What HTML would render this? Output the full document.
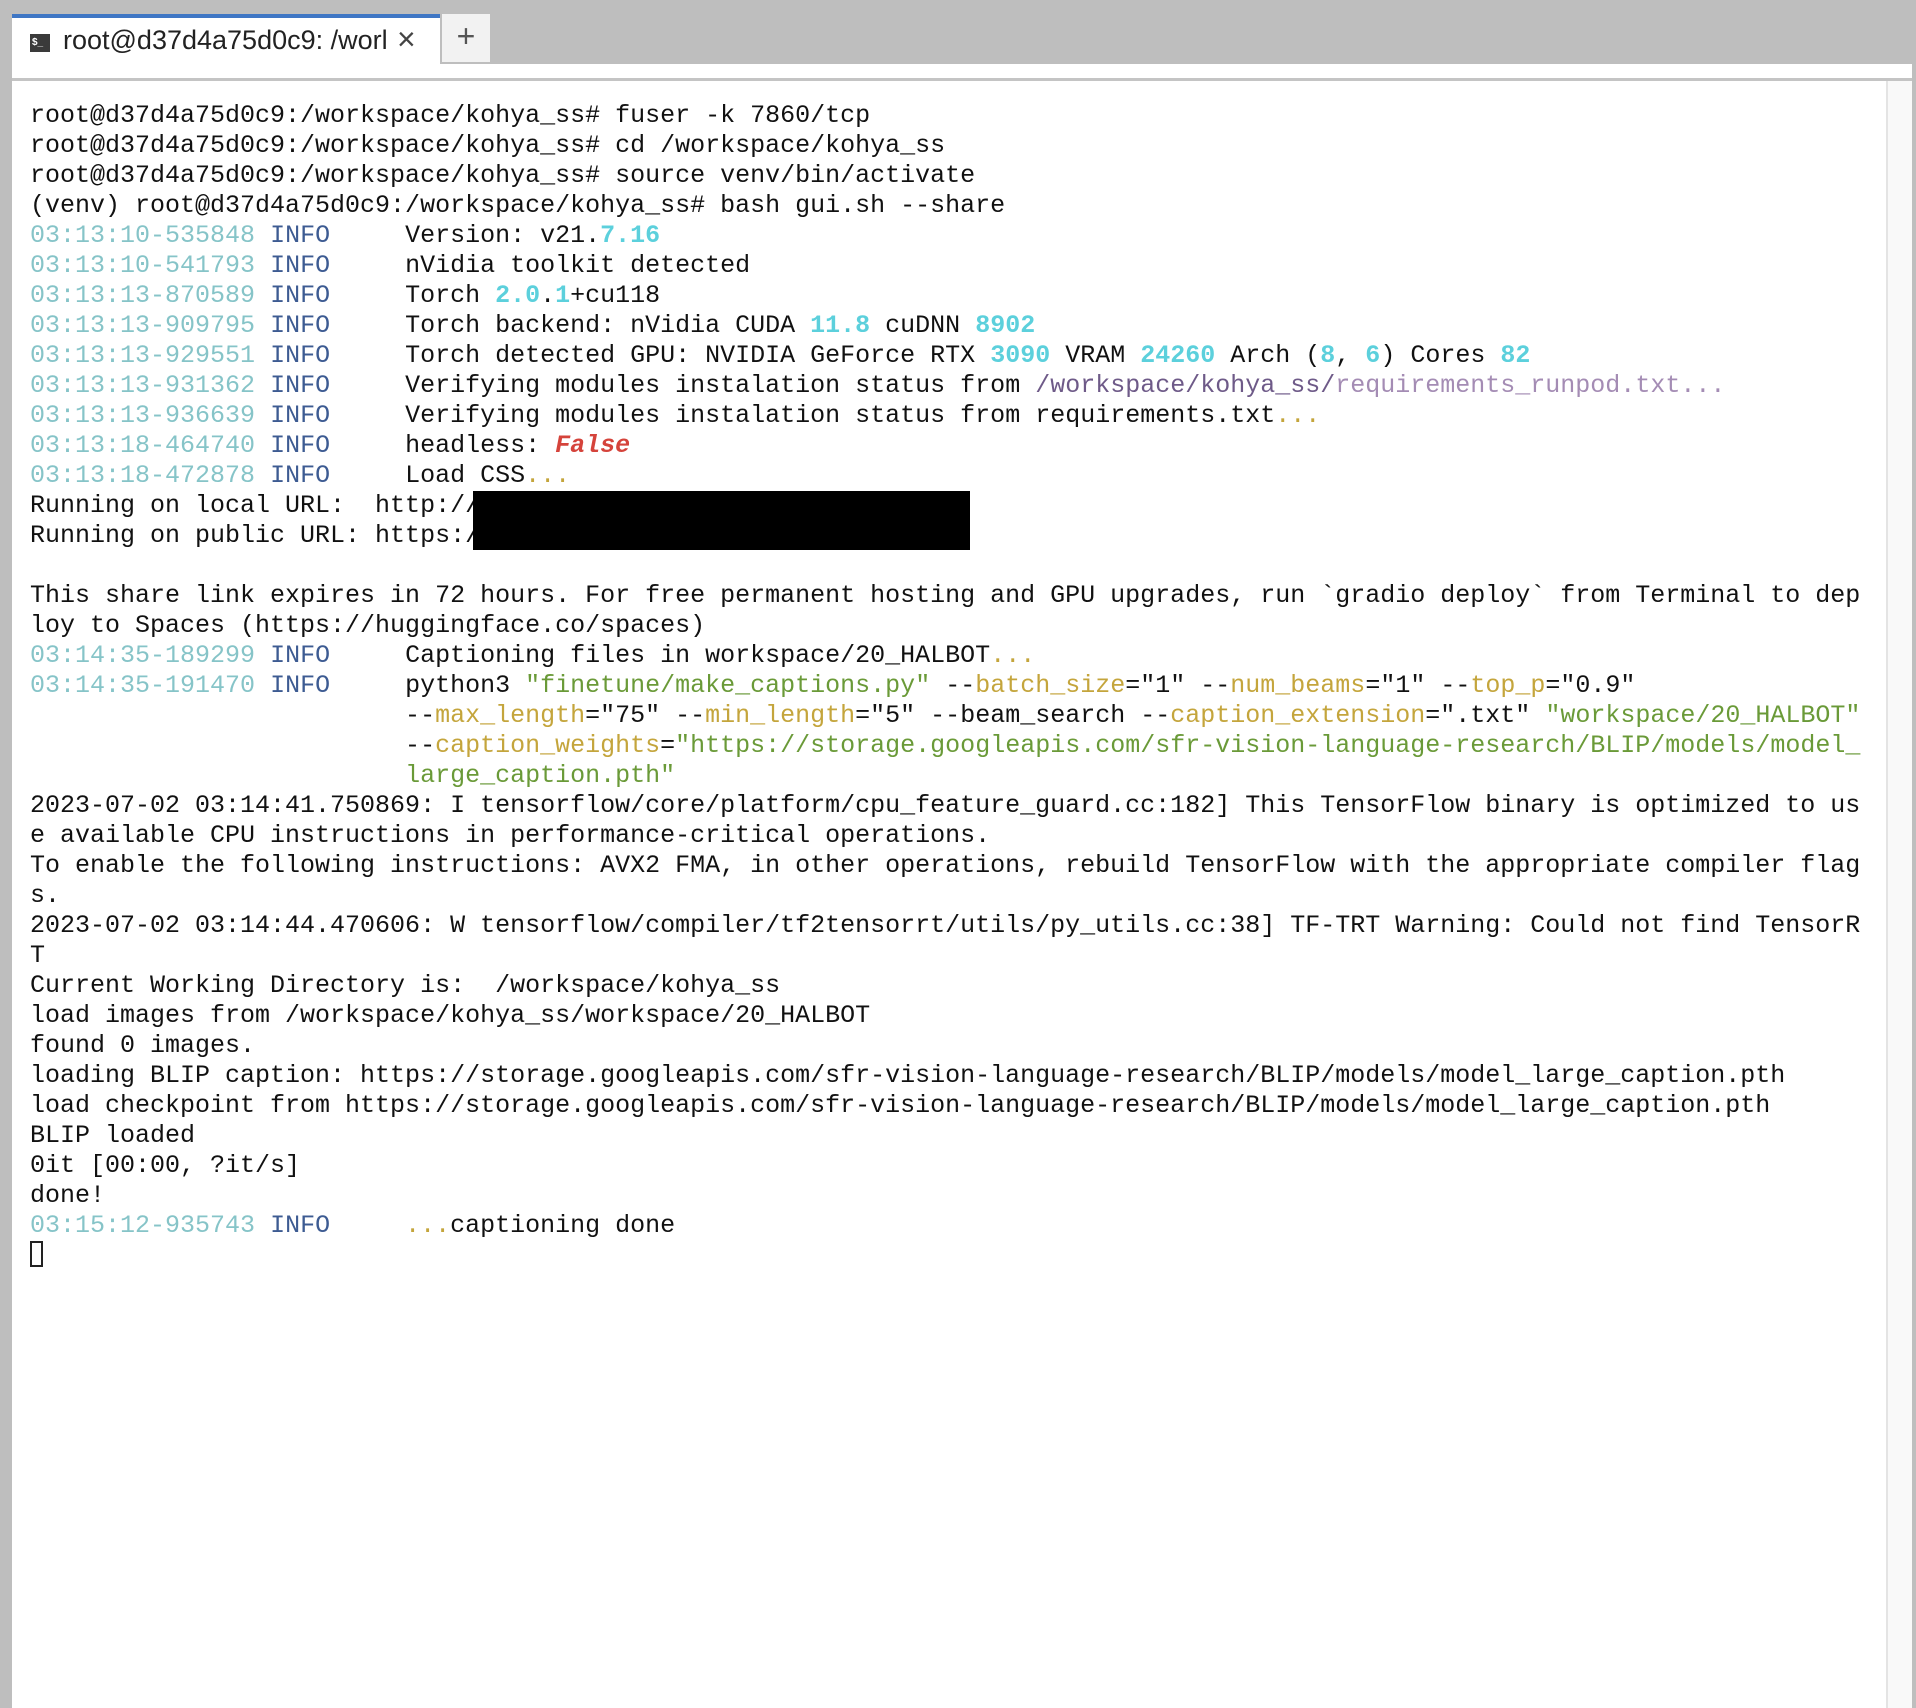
<!DOCTYPE html>
<html><head><meta charset="utf-8"><style>
html,body{margin:0;padding:0;}
body{width:1916px;height:1708px;background:#bebebe;position:relative;overflow:hidden;font-family:"Liberation Mono","Courier New",monospace;}
.tab{position:absolute;left:12px;top:14px;width:428px;height:50px;background:#fff;border-top:4px solid #3f76c4;box-sizing:border-box;}
.tab .ic{position:absolute;left:18px;top:16px;width:20px;height:18px;background:#3a3a3a;color:#fff;font:bold 10px "Liberation Sans",sans-serif;line-height:18px;padding-left:2px;box-sizing:border-box;}
.tab .t{position:absolute;left:51px;top:7px;font:27px "Liberation Sans",sans-serif;color:#222;white-space:nowrap;width:342px;overflow:hidden;}
.tab .x{position:absolute;left:385px;top:3px;font:32px "Liberation Sans",sans-serif;color:#444;}
.plus{position:absolute;left:442px;top:14px;width:48px;height:48px;background:#f2f2f2;color:#555;font:32px "Liberation Sans",sans-serif;text-align:center;line-height:44px;}
.panel{position:absolute;left:12px;top:64px;width:1904px;height:1644px;background:#fff;}
.sep{position:absolute;left:12px;top:78px;width:1904px;height:3px;background:#c4c4c4;}
.sb{position:absolute;left:1886px;top:81px;width:26px;height:1627px;background:#f9f9f9;border-left:2px solid #e4e4e4;}
.rg{position:absolute;left:1912px;top:64px;width:4px;height:1644px;background:#bebebe;}
pre{position:absolute;left:30px;top:101px;margin:0;font-size:25px;line-height:30px;color:#111;font-family:"Liberation Mono","Courier New",monospace;}
.ts{color:#86c4c8}.in{color:#3d5b92}.n{color:#5cd0dc;font-weight:bold}.y{color:#c4a53c}.p1{color:#6e5a88}.p2{color:#a48cb4}.g{color:#6a9a38}
.r{color:#d5433b;font-style:italic;font-weight:bold}
.box{position:absolute;left:473px;top:491px;width:497px;height:59px;background:#000;}
.cur{display:inline-block;width:13px;height:26px;border:2px solid #222;vertical-align:-5px;box-sizing:border-box;}
</style></head><body>
<div class="tab"><div class="ic">$_</div><div class="t">root@d37d4a75d0c9: /worl</div><div class="x">×</div></div>
<div class="plus">+</div>
<div class="panel"></div>
<div class="sep"></div>
<div class="sb"></div>
<div class="rg"></div>
<pre>root@d37d4a75d0c9:/workspace/kohya_ss# fuser -k 7860/tcp
root@d37d4a75d0c9:/workspace/kohya_ss# cd /workspace/kohya_ss
root@d37d4a75d0c9:/workspace/kohya_ss# source venv/bin/activate
(venv) root@d37d4a75d0c9:/workspace/kohya_ss# bash gui.sh --share
<span class="ts">03:13:10-535848</span> <span class="in">INFO</span>     Version: v21.<span class="n">7.16</span>
<span class="ts">03:13:10-541793</span> <span class="in">INFO</span>     nVidia toolkit detected
<span class="ts">03:13:13-870589</span> <span class="in">INFO</span>     Torch <span class="n">2.0</span>.<span class="n">1</span>+cu118
<span class="ts">03:13:13-909795</span> <span class="in">INFO</span>     Torch backend: nVidia CUDA <span class="n">11.8</span> cuDNN <span class="n">8902</span>
<span class="ts">03:13:13-929551</span> <span class="in">INFO</span>     Torch detected GPU: NVIDIA GeForce RTX <span class="n">3090</span> VRAM <span class="n">24260</span> Arch (<span class="n">8</span>, <span class="n">6</span>) Cores <span class="n">82</span>
<span class="ts">03:13:13-931362</span> <span class="in">INFO</span>     Verifying modules instalation status from <span class="p1">/workspace/kohya_ss/</span><span class="p2">requirements_runpod.txt...</span>
<span class="ts">03:13:13-936639</span> <span class="in">INFO</span>     Verifying modules instalation status from requirements.txt<span class="y">...</span>
<span class="ts">03:13:18-464740</span> <span class="in">INFO</span>     headless: <span class="r">False</span>
<span class="ts">03:13:18-472878</span> <span class="in">INFO</span>     Load CSS<span class="y">...</span>
Running on local URL:  http://
Running on public URL: https://

This share link expires in 72 hours. For free permanent hosting and GPU upgrades, run `gradio deploy` from Terminal to dep
loy to Spaces (https://huggingface.co/spaces)
<span class="ts">03:14:35-189299</span> <span class="in">INFO</span>     Captioning files in workspace/20_HALBOT<span class="y">...</span>
<span class="ts">03:14:35-191470</span> <span class="in">INFO</span>     python3 <span class="g">"finetune/make_captions.py"</span> --<span class="y">batch_size</span>="1" --<span class="y">num_beams</span>="1" --<span class="y">top_p</span>="0.9"
                         --<span class="y">max_length</span>="75" --<span class="y">min_length</span>="5" --beam_search --<span class="y">caption_extension</span>=".txt" <span class="g">"workspace/20_HALBOT"</span>
                         --<span class="y">caption_weights</span>=<span class="g">"https://storage.googleapis.com/sfr-vision-language-research/BLIP/models/model_</span>
                         <span class="g">large_caption.pth"</span>
2023-07-02 03:14:41.750869: I tensorflow/core/platform/cpu_feature_guard.cc:182] This TensorFlow binary is optimized to us
e available CPU instructions in performance-critical operations.
To enable the following instructions: AVX2 FMA, in other operations, rebuild TensorFlow with the appropriate compiler flag
s.
2023-07-02 03:14:44.470606: W tensorflow/compiler/tf2tensorrt/utils/py_utils.cc:38] TF-TRT Warning: Could not find TensorR
T
Current Working Directory is:  /workspace/kohya_ss
load images from /workspace/kohya_ss/workspace/20_HALBOT
found 0 images.
loading BLIP caption: https://storage.googleapis.com/sfr-vision-language-research/BLIP/models/model_large_caption.pth
load checkpoint from https://storage.googleapis.com/sfr-vision-language-research/BLIP/models/model_large_caption.pth
BLIP loaded
0it [00:00, ?it/s]
done!
<span class="ts">03:15:12-935743</span> <span class="in">INFO</span>     <span class="y">...</span>captioning done
<span class="cur"></span></pre>
<div class="box"></div>
</body></html>
